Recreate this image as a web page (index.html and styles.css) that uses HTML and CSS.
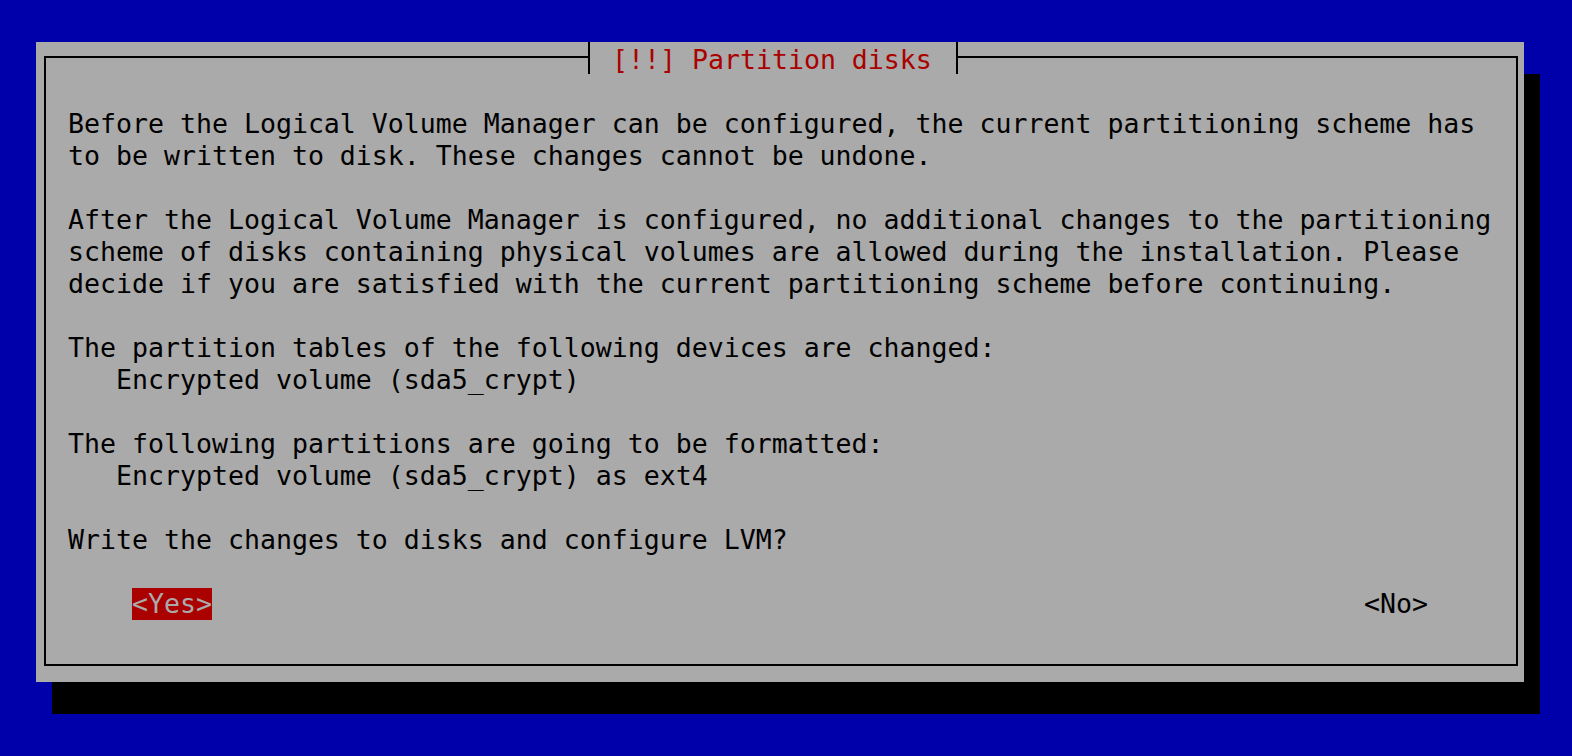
FILE: index.html
```html
<!DOCTYPE html>
<html>
<head>
<meta charset="utf-8">
<title>Partition disks</title>
<link rel="stylesheet" href="styles.css">
</head>
<body>
<div class="screen">
  <div class="dialog">
    <div class="title"> [!!] Partition disks </div>
    <div class="frame">
      <p class="para">Before the Logical Volume Manager can be configured, the current partitioning scheme has
to be written to disk. These changes cannot be undone.</p>
      <p class="para">After the Logical Volume Manager is configured, no additional changes to the partitioning
scheme of disks containing physical volumes are allowed during the installation. Please
decide if you are satisfied with the current partitioning scheme before continuing.</p>
      <p class="para">The partition tables of the following devices are changed:
   Encrypted volume (sda5_crypt)</p>
      <p class="para">The following partitions are going to be formatted:
   Encrypted volume (sda5_crypt) as ext4</p>
      <p class="para">Write the changes to disks and configure LVM?</p>
      <div class="buttons">
        <span class="btn btn-active">&lt;Yes&gt;</span>
        <span class="btn btn-no">&lt;No&gt;</span>
      </div>
    </div>
  </div>
</div>
</body>
</html>
```
FILE: styles.css
```css
html, body {
  margin: 0;
  padding: 0;
  background: #0000aa;
  height: 756px;
  overflow: hidden;
}

.screen {
  padding: 42px 0 0 36px;
  font-family: "DejaVu Sans Mono", "Liberation Mono", monospace;
  font-size: 26.576px;
  line-height: 32px;
  color: #000;
}

.dialog {
  position: relative;
  width: 1488px;
  height: 640px;
  background: #aaaaaa;
  box-shadow: 16px 32px 0 0 #000;
  box-sizing: border-box;
  padding: 14px 6px 16px 8px;
}

.title {
  position: absolute;
  left: 552px;
  top: 0;
  height: 32px;
  padding: 2px 8px 0 6px;
  box-sizing: border-box;
  background: #aaaaaa;
  border-left: 2px solid #000;
  border-right: 2px solid #000;
  color: #aa0000;
  white-space: pre;
}

.frame {
  height: 100%;
  box-sizing: border-box;
  border: 2px solid #000;
  padding: 50px 0 0 22px;
}

.para {
  margin: 0 0 32px 0;
  white-space: pre;
}

.buttons {
  display: flex;
  padding: 0 88px 0 64px;
  height: 32px;
}

.btn {
  white-space: pre;
  display: block;
  height: 32px;
}

.btn-active {
  background: #aa0000;
  color: #aaaaaa;
}

.btn-no {
  margin-left: auto;
}
```
